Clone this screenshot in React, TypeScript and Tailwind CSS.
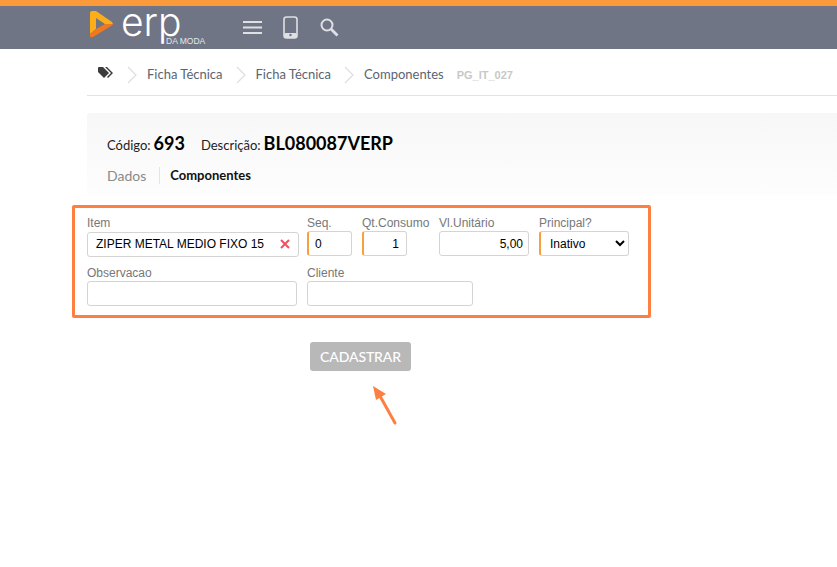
import React from 'react';

const Logo: React.FC = () => (
  <div className="flex items-start w-[100px] h-[43px] relative">
    <svg width="24" height="28" viewBox="0 0 24 28" className="mt-[4px] shrink-0">
      <path d="M2 1 Q0 1 0 3 L0 24 L6 19 L6 8 L15 14 L23 14 L22 12 L6 1 Z" fill="#fbae17" />
      <path d="M0 24 L0 26 Q0 28 3 27 L21 16 Q23 15 23 14 L15 14 L6 19 Z" fill="#f0781e" />
    </svg>
    <span className="ml-[7px] mt-[1px] font-['Inter',sans-serif] text-[39px] leading-[30px] font-light text-white">erp</span>
    <span className="absolute left-[76px] top-[31px] font-['Liberation_Sans',sans-serif] text-[8.5px] leading-[8px] whitespace-nowrap text-[#e5e7eb]">DA MODA</span>
  </div>
);

const Chevron: React.FC = () => (
  <svg width="10" height="18" viewBox="0 0 10 18" fill="none" stroke="#dedede" strokeWidth="1.2" className="shrink-0">
    <path d="M1 1 L9 9 L1 17" />
  </svg>
);

const Field: React.FC<{ label: string; className: string; children: React.ReactNode }> = ({ label, className, children }) => (
  <div className={`flex flex-col ${className}`}>
    <label className="text-xs leading-[14px] h-[14px] mb-[1px] text-[#777] whitespace-nowrap">{label}</label>
    {children}
  </div>
);

const inputClass = 'h-[25px] w-full bg-white border border-[#d4d4d4] rounded-[3px] text-xs text-black px-2 outline-none';
const accentClass = 'border-l-2 border-l-[#f7a13c]';

const App: React.FC = () => {
  return (
    <div className="w-[837px] h-[567px] overflow-hidden bg-white font-['Liberation_Sans',sans-serif]">
      {/* Top bar */}
      <div className="h-[49px] bg-[#6f7585] border-t-[6px] border-[#fb9a3a] flex items-center pl-[90px]">
        <Logo />
        <div className="flex items-center ml-[53px]">
          <svg width="19" height="13" viewBox="0 0 19 13" fill="#dfe0e3">
            <rect y="0" width="19" height="2" />
            <rect y="5.5" width="19" height="2" />
            <rect y="11" width="19" height="2" />
          </svg>
          <svg width="15" height="23" viewBox="0 0 15 23" fill="none" className="ml-[21px]">
            <rect x="1" y="1" width="13" height="21" rx="2.5" stroke="#dfe0e3" strokeWidth="1.6" />
            <rect x="1" y="17" width="13" height="5" rx="1.5" fill="#dfe0e3" />
            <circle cx="7.5" cy="19" r="1.2" fill="#6f7585" />
          </svg>
          <svg width="19" height="19" viewBox="0 0 19 19" fill="none" stroke="#dfe0e3" strokeWidth="2" className="ml-[22px]">
            <circle cx="7" cy="7" r="5.5" />
            <path d="M11 11 L17.5 17.5" strokeWidth="2.8" />
          </svg>
        </div>
      </div>

      {/* Breadcrumb */}
      <div className="ml-[87px] h-[47px] border-b border-[#e2e2e2] flex items-center pl-[11px] pt-[6px] font-['Lato',sans-serif] text-[13px] text-[#5b6472]">
        <svg width="15" height="12" viewBox="0 0 15 12" className="mb-[5px] shrink-0">
          <path d="M0 1 Q0 0 1 0 L5 0 L11 6 L6 11 L0 5 Z" fill="#3c3c3c" />
          <path d="M7 0 L9 0 L15 6 L10 11 L9 10 L13 6 Z" fill="#3c3c3c" />
        </svg>
        <div className="ml-[14px] mr-[10px]"><Chevron /></div>
        <span>Ficha Técnica</span>
        <div className="ml-[13px] mr-[10px]"><Chevron /></div>
        <span>Ficha Técnica</span>
        <div className="ml-[13px] mr-[10px]"><Chevron /></div>
        <span>Componentes</span>
        <span className="ml-[13px] font-['Liberation_Sans',sans-serif] text-[11px] font-bold text-[#c8c8c8]">PG_IT_027</span>
      </div>

      {/* Header card */}
      <div className="ml-[87px] mt-[17px] h-[82px] pl-[20px] pt-[17px] rounded-tl-[3px] bg-gradient-to-b from-[#f7f7f7] to-[#fdfdfd] font-['Lato',sans-serif]">
        <div className="flex items-baseline h-[24px] text-[13px] text-[#222]">
          <span>Código:</span>
          <span className="ml-[3px] text-[18px] font-bold text-black">693</span>
          <span className="ml-[16px]">Descrição:</span>
          <span className="ml-[3px] text-[18px] font-bold text-black">BL080087VERP</span>
        </div>
        <div className="flex items-center mt-[13px] text-[14px] leading-[17px]">
          <span className="text-[#8a8a8a] pr-[13px] border-r border-[#e4e4e4]">Dados</span>
          <span className="pl-[10px] font-bold text-[13px] text-[#111]">Componentes</span>
        </div>
      </div>

      {/* Form */}
      <div className="ml-[72px] mt-[10px] w-[579px] h-[113px] border-[3px] border-[#fd7f42] rounded-[2px] pl-[12px] pt-[8px]">
        <div className="flex">
          <Field label="Item" className="w-[212px]">
            <div className="relative">
              <input readOnly value="ZIPER METAL MEDIO FIXO 15" className={inputClass} />
              <svg width="10" height="10" viewBox="0 0 10 10" stroke="#f0505f" strokeWidth="2" className="absolute right-[9px] top-[8px]">
                <path d="M1 1 L9 9 M9 1 L1 9" />
              </svg>
            </div>
          </Field>
          <Field label="Seq." className="w-[45px] ml-[8px]">
            <input readOnly value="0" className={`${inputClass} ${accentClass} px-[6px]`} />
          </Field>
          <Field label="Qt.Consumo" className="w-[45px] ml-[10px]">
            <input readOnly value="1" className={`${inputClass} ${accentClass} text-right px-[7px]`} />
          </Field>
          <Field label="Vl.Unitário" className="w-[90px] ml-[32px]">
            <input readOnly value="5,00" className={`${inputClass} text-right px-[5px]`} />
          </Field>
          <Field label="Principal?" className="w-[90px] ml-[10px]">
            <select defaultValue="Inativo" className={`${inputClass} ${accentClass} pl-[5px] pr-0`}>
              <option>Inativo</option>
              <option>Ativo</option>
            </select>
          </Field>
        </div>
        <div className="flex mt-[9px]">
          <Field label="Observacao" className="w-[210px]">
            <input readOnly className={inputClass} />
          </Field>
          <Field label="Cliente" className="w-[166px] ml-[10px]">
            <input readOnly className={inputClass} />
          </Field>
        </div>
      </div>

      {/* Submit */}
      <div className="ml-[310px] mt-[24px] relative w-[101px]">
        <button className="w-[101px] h-[29px] pb-[1px] bg-[#b8b8b8] rounded-[3px] text-[14px] tracking-[-0.1px] font-['Lato',sans-serif] font-medium text-white">CADASTRAR</button>
        {/* Annotation arrow */}
        <svg width="30" height="44" viewBox="0 0 30 44" className="absolute left-[59px] top-[41px]">
          <path d="M26 40 L11 13" stroke="#fd7f42" strokeWidth="3" strokeLinecap="round" />
          <path d="M4 3 L17 11 L7 17 Z" fill="#fd7f42" />
        </svg>
      </div>
    </div>
  );
};

export default App;
